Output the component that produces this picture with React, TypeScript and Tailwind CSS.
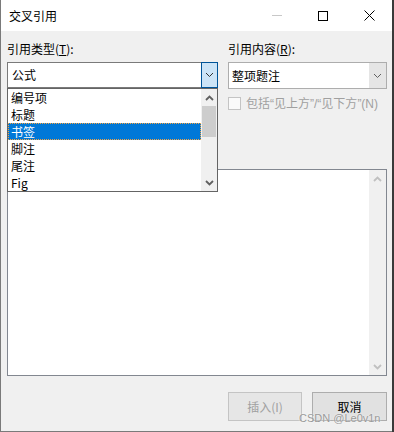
import type { ReactNode } from 'react';

const typeItems = ['编号项', '标题', '书签', '脚注', '尾注', 'Fig'];

function Chevron({ up = false, bold = false, color = '#606060' }: { up?: boolean; bold?: boolean; color?: string }) {
  return (
    <svg width="9" height="6" viewBox="0 0 9 6" className="block">
      <polyline
        points={up ? '1,5 4.5,1.5 8,5' : '1,1 4.5,4.5 8,1'}
        fill="none"
        stroke={color}
        strokeWidth={bold ? 1.8 : 1}
      />
    </svg>
  );
}

function Label({ children }: { children: ReactNode }) {
  return <div className="h-[16px] whitespace-nowrap">{children}</div>;
}

// narrow latin quotes, like the dialog font draws them
function Q({ children }: { children: ReactNode }) {
  return <span className="font-['Liberation_Sans',sans-serif]">{children}</span>;
}

function DropList() {
  return (
    <div className="absolute left-0 top-[26px] z-10 flex h-[104px] w-[211px] border border-[#646464] bg-white">
      <div className="flex w-[193px] flex-col">
        {typeItems.map((item) => {
          const selected = item === '书签';
          return (
            <div
              key={item}
              className={`flex h-[17px] items-center pl-[3px] ${
                selected ? 'bg-[#0078d7] text-white outline-1 -outline-offset-1 outline-dotted outline-[#f5a442]' : ''
              }`}
            >
              {item}
            </div>
          );
        })}
      </div>
      <div className="flex w-[16px] flex-col bg-[#f0f0f0]">
        <div className="grid h-[17px] place-items-center">
          <Chevron up bold />
        </div>
        <div className="mx-[1px] h-[31px] bg-[#cdcdcd]" />
        <div className="flex-1" />
        <div className="grid h-[17px] place-items-center">
          <Chevron bold />
        </div>
      </div>
    </div>
  );
}

export default function App() {
  return (
    <div className="flex h-[432px] w-[394px] bg-[#3a3a3a] font-['Noto_Sans_CJK_SC',sans-serif] text-[12px] leading-[16px] text-black">
      <div className="relative flex h-[432px] w-[392px] flex-col border-b border-l border-[#7a7a7a] bg-[#f0f0f0]">
        <div className="flex h-[31px] shrink-0 items-center bg-white">
          <span className="pl-2">交叉引用</span>
          <div className="ml-auto flex h-full">
            <div className="grid w-[46px] place-items-center">
              <div className="h-px w-[10px] bg-[#c8c8c8]" />
            </div>
            <div className="grid w-[46px] place-items-center">
              <div className="h-[10px] w-[10px] border border-black" />
            </div>
            <div className="grid w-[46px] place-items-center">
              <svg width="11" height="11" viewBox="0 0 11 11">
                <path d="M0.5 0.5L10.5 10.5M10.5 0.5L0.5 10.5" stroke="#000" strokeWidth="1" />
              </svg>
            </div>
          </div>
        </div>

        <div className="flex flex-1 flex-col pl-[6px] pr-[5px] pt-[10px]">
          <div className="grid grid-cols-[211px_159px] gap-x-[10px]">
            <Label>
              引用类型(<span className="underline">T</span>):
            </Label>
            <Label>
              引用内容(<span className="underline">R</span>):
            </Label>

            <div className="relative mt-[5px]">
              <div className="flex h-[26px] border border-[#7a7a7a] bg-white">
                <div className="flex flex-1 items-center pl-[4px]">公式</div>
                <div className="-my-px -mr-px grid w-[17px] place-items-center border border-[#005499] bg-[#cce4f7]">
                  <Chevron color="#333" />
                </div>
              </div>
              <DropList />
            </div>

            <div className="mt-[5px] flex flex-col">
              <div className="flex h-[27px] border border-[#adadad] bg-white">
                <div className="flex flex-1 items-center pl-[3px]">整项题注</div>
                <div className="grid w-[17px] place-items-center bg-[#e5e5e5]">
                  <Chevron color="#606060" />
                </div>
              </div>
              <div className="mt-[6px] flex h-[16px] items-center gap-[5px] text-[#a0a0a0]">
                <div className="h-[13px] w-[13px] shrink-0 border border-[#c4c4c4] bg-[#fafafa]" />
                <span className="whitespace-nowrap">
                  包括<Q>“</Q>见上方<Q>”/“</Q>见下方<Q>”(N)</Q>
                </span>
              </div>
            </div>
          </div>

          <div className="mt-[58px] flex h-[207px] border border-[#828790] bg-white">
            <div className="flex-1" />
            <div className="flex w-[17px] flex-col justify-between bg-[#f0f0f0]">
              <div className="grid h-[17px] place-items-center">
                <Chevron up bold color="#c0c0c0" />
              </div>
              <div className="grid h-[17px] place-items-center">
                <Chevron bold color="#c0c0c0" />
              </div>
            </div>
          </div>

          <div className="mt-[16px] flex justify-end gap-[10px]">
            <button
              type="button"
              className="h-[29px] w-[74px] border border-[#c4c4c4] bg-[#e6e6e6] text-[#a0a0a0]"
            >
              插入(I)
            </button>
            <button type="button" className="h-[29px] w-[75px] border border-[#adadad] bg-[#e1e1e1] text-black">
              取消
            </button>
          </div>
        </div>

        <div className="absolute left-[298px] top-[410px] whitespace-nowrap font-['Liberation_Sans',sans-serif] text-[11px] leading-[16px] text-[#9a9a9a] [text-shadow:0_0_2px_#fff]">
          CSDN @Le0v1n
        </div>
      </div>
    </div>
  );
}
